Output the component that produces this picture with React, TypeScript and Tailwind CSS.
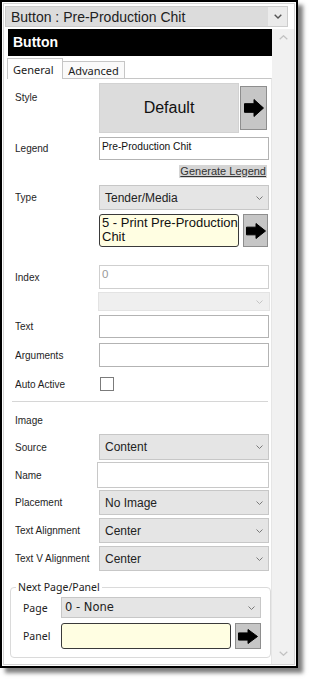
import React from "react";

const lbl =
  "w-[84px] shrink-0 whitespace-nowrap text-[11.5px] leading-[13px] text-[#1e1e1e] scale-x-[0.87] origin-left";

function Chevron({ color = "#7a7a7a" }: { color?: string }) {
  return (
    <svg width="7" height="4" viewBox="0 0 7 4" className="shrink-0">
      <polyline points="0.5,0.5 3.5,3.5 6.5,0.5" fill="none" stroke={color} strokeWidth="1" />
    </svg>
  );
}

function Arrow({ w = 20, h = 18 }: { w?: number; h?: number }) {
  const mid = h / 2;
  const shaft = h * 0.24;
  const hx = w * 0.5;
  return (
    <svg width={w} height={h} viewBox={`0 0 ${w} ${h}`}>
      <polygon
        points={`0.5,${mid - shaft} ${hx},${mid - shaft} ${hx},0.5 ${w - 0.5},${mid} ${hx},${h - 0.5} ${hx},${mid + shaft} 0.5,${mid + shaft}`}
        fill="#000"
        stroke="#000"
        strokeWidth="1"
        strokeLinejoin="miter"
      />
    </svg>
  );
}

function Select({ value, className = "" }: { value: string; className?: string }) {
  return (
    <div
      className={`flex items-center justify-between bg-[#e5e5e5] border border-[#c7c7c7] pl-[5px] pr-[5px] text-[12px] text-[#222] ${className}`}
    >
      <span>{value}</span>
      <Chevron />
    </div>
  );
}

function Input({ className = "", children }: { className?: string; children?: React.ReactNode }) {
  return <div className={`bg-white border border-[#b3b3b3] ${className}`}>{children}</div>;
}

function Row({ label, className = "", children }: { label: string; className?: string; children: React.ReactNode }) {
  return (
    <div className={`flex items-center ${className}`}>
      <div className={lbl}>{label}</div>
      {children}
    </div>
  );
}

export default function App() {
  return (
    <div className="w-[312px] h-[682px] bg-white font-['Liberation_Sans',Arial,sans-serif]">
      <div className="w-[298px] h-[668px] border-2 border-black bg-white p-px shadow-[5px_5px_4px_rgba(0,0,0,0.5)]">
        <div className="h-full border border-[#d4d4d4] flex flex-col">
          {/* title dropdown */}
          <div className="mt-[2px] ml-px w-[283px] h-[21px] flex border border-[#cdcdcd] shrink-0">
            <div className="flex-1 bg-[#dcdcdc] flex items-center pl-[5px] text-[14px] text-[#222] leading-none">
              Button : Pre-Production Chit
            </div>
            <div className="w-[19px] bg-[#ebebeb] flex items-center justify-center">
              <svg width="8" height="5" viewBox="0 0 8 5">
                <polyline points="0.7,0.7 4,4 7.3,0.7" fill="none" stroke="#555" strokeWidth="1.4" />
              </svg>
            </div>
          </div>

          {/* body */}
          <div className="mt-[2px] flex flex-1 min-h-0">
            <div className="ml-[4px] w-[264px] flex flex-col">
              <div className="h-[27px] bg-black flex items-center pl-[5px] text-white font-bold text-[14px] shrink-0">
                Button
              </div>

              {/* tabs */}
              <div className="mt-[2px] h-[20px] flex items-end font-['Noto_Sans',sans-serif] text-[11px] text-[#222] shrink-0">
                <div className="-ml-px relative z-10 -mb-px w-[56px] h-[21px] bg-white border-l border-t border-r border-[#c6c6c6] flex items-center pl-[5px] pt-[1px] leading-none">
                  General
                </div>
                <div className="w-[62px] h-[17px] bg-[#fafafa] border-t border-r border-[#c6c6c6] flex items-center justify-center leading-none pt-[1px]">
                  Advanced
                </div>
              </div>

              {/* panel */}
              <div className="flex-1 border-t border-[#c6c6c6] border-r border-r-[#e6e6e6] pl-[7px] pr-[2px] flex flex-col">
                {/* Style */}
                <div className="mt-[4px] flex items-center">
                  <div className={`${lbl} self-start pt-[8px]`}>Style</div>
                  <div className="w-[140px] h-[50px] bg-[#dcdcdc] border border-[#d2d2d2] flex items-center justify-center text-[16px] text-[#111]">
                    Default
                  </div>
                  <div className="ml-[1px] w-[27px] h-[44px] bg-[#c6c6c6] border border-[#8e8e8e] flex items-center justify-center">
                    <Arrow w={20} h={18} />
                  </div>
                </div>

                {/* Legend */}
                <Row label="Legend" className="mt-[4px]">
                  <Input className="w-[170px] h-[23px] pl-[2px] pt-[1px]">
                    <div className="text-[11.5px] leading-[14px] text-[#111] scale-x-[0.89] origin-left whitespace-nowrap">
                      Pre-Production Chit
                    </div>
                  </Input>
                </Row>

                <div className="mt-[5px] self-end mr-[2px] h-[13px] bg-[#d5d5d5] px-px text-[11px] leading-[13px] text-[#333] underline">
                  Generate Legend
                </div>

                <Row label="Type" className="mt-[7px]">
                  <Select value="Tender/Media" className="w-[170px] h-[25px]" />
                </Row>

                <div className="mt-[4px] flex pl-[84px]">
                  <div className="w-[140px] h-[33px] bg-[#fffee2] border border-[#3a3a3a] rounded-[3px] pl-[2px] pt-[1px] text-[13px] leading-[14px] text-[#111]">
                    5 - Print Pre-Production Chit
                  </div>
                  <div className="ml-[4px] w-[25px] h-[33px] bg-[#c6c6c6] border border-[#8e8e8e] flex items-center justify-center">
                    <Arrow w={20} h={16} />
                  </div>
                </div>

                <Row label="Index" className="mt-[18px]">
                  <Input className="w-[170px] h-[24px] pl-[2px] pt-[1px] border-[#cfcfcf]">
                    <div className="text-[11.5px] leading-[14px] text-[#9a9a9a]">0</div>
                  </Input>
                </Row>

                <div className="mt-[3px] ml-[83px] w-[172px] h-[19px] bg-[#efefef] border border-[#e3e3e3] flex items-center justify-end pr-[6px]">
                  <Chevron color="#c4c4c4" />
                </div>

                <Row label="Text" className="mt-[4px]">
                  <Input className="w-[170px] h-[23px]" />
                </Row>

                <Row label="Arguments" className="mt-[5px]">
                  <Input className="w-[170px] h-[24px]" />
                </Row>

                <Row label="Auto Active" className="mt-[10px] h-[14px]">
                  <div className="ml-px w-[14px] h-[14px] border border-[#7b7b7b] bg-white" />
                </Row>

                <div className="mt-[10px] -ml-[3px] w-[256px] h-px bg-[#d6d6d6]" />

                <div className="mt-[12px] h-[13px] flex items-center">
                  <div className={lbl}>Image</div>
                </div>

                <Row label="Source" className="mt-[7px]">
                  <Select value="Content" className="w-[170px] h-[26px]" />
                </Row>

                <Row label="Name" className="mt-[2px]">
                  <Input className="-ml-[2px] w-[174px] h-[26px] border-[#c8c8c8]" />
                </Row>

                <Row label="Placement" className="mt-[2px]">
                  <Select value="No Image" className="w-[170px] h-[25px]" />
                </Row>

                <Row label="Text Alignment" className="mt-[3px]">
                  <Select value="Center" className="w-[170px] h-[25px]" />
                </Row>

                <Row label="Text V Alignment" className="mt-[3px]">
                  <Select value="Center" className="w-[170px] h-[25px]" />
                </Row>

                {/* fieldset */}
                <fieldset className="mt-[10px] -ml-[5px] w-[261px] border border-[#dadada] rounded-[4px] pl-[5px] pr-[8px] pb-[8px] font-['Noto_Sans',sans-serif] text-[#222]">
                  <legend className="px-[2px] text-[10.5px] leading-[12px]">Next Page/Panel</legend>
                  <div className="pt-[4px] pl-[7px] flex flex-col">
                    <div className="flex items-center">
                      <div className="w-[38px] text-[10.5px] leading-[12px]">Page</div>
                      <div className="w-[200px] h-[21px] bg-[#e5e5e5] border border-[#c7c7c7] flex items-center justify-between pl-[3px] pr-[5px] font-['DejaVu_Sans',sans-serif] text-[11.5px] text-[#222]">
                        <span>0 - None</span>
                        <Chevron />
                      </div>
                    </div>
                    <div className="mt-[5px] flex items-center">
                      <div className="w-[38px] text-[10.5px] leading-[12px]">Panel</div>
                      <div className="w-[170px] h-[26px] bg-[#fffee2] border border-[#3a3a3a] rounded-[3px]" />
                      <div className="ml-[4px] w-[26px] h-[26px] bg-[#c6c6c6] border border-[#8e8e8e] flex items-center justify-center">
                        <Arrow w={20} h={15} />
                      </div>
                    </div>
                  </div>
                </fieldset>
              </div>
            </div>

            {/* scrollbar */}
            <div className="flex-1 bg-[#f1f1f1] flex flex-col items-center justify-between pt-[6px] pb-[8px]">
              <svg width="9" height="5" viewBox="0 0 9 5">
                <polyline points="0.7,4.3 4.5,0.7 8.3,4.3" fill="none" stroke="#c2c2c2" strokeWidth="1.2" />
              </svg>
              <svg width="9" height="5" viewBox="0 0 9 5">
                <polyline points="0.7,0.7 4.5,4.3 8.3,0.7" fill="none" stroke="#c2c2c2" strokeWidth="1.2" />
              </svg>
            </div>
          </div>
        </div>
      </div>
    </div>
  );
}
